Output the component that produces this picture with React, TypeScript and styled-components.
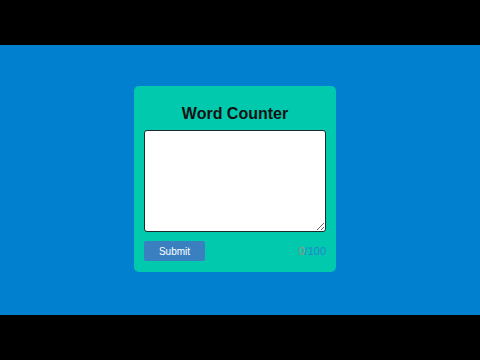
import React, { useState } from 'react';
import styled, { createGlobalStyle } from 'styled-components';

const GlobalStyle = createGlobalStyle`
  html, body {
    margin: 0;
    padding: 0;
    background: #000;
    font-family: "Liberation Sans", Arial, sans-serif;
  }
`;

const Frame = styled.div`
  height: 360px;
  display: flex;
  flex-direction: column;
  justify-content: center;
`;

const Stage = styled.main`
  height: 270px;
  box-sizing: border-box;
  background-color: #0080cf;
  display: flex;
  align-items: center;
  justify-content: center;
  padding: 0 10px 2px 0;
`;

const Card = styled.div`
  width: 202px;
  box-sizing: border-box;
  padding: 17px 10px 11px;
  background-color: #00c9ad;
  border-radius: 5px;
  display: flex;
  flex-direction: column;
`;

const Title = styled.h1`
  margin: 0 0 5px;
  font-size: 16px;
  line-height: 22px;
  font-weight: bold;
  color: #111;
  text-align: center;
`;

const TextBox = styled.textarea`
  width: 182px;
  height: 102px;
  box-sizing: border-box;
  border: 1px solid #1b2b2b;
  border-radius: 3px;
  background: #fff;
  padding: 4px;
  font-family: inherit;
  font-size: 12px;
  outline: none;
`;

const Footer = styled.div`
  margin-top: 9px;
  display: flex;
  align-items: center;
  justify-content: space-between;
`;

const SubmitButton = styled.button`
  width: 61px;
  height: 20px;
  border: none;
  border-radius: 2px;
  background-color: #3a7fc0;
  color: #fff;
  font-family: inherit;
  font-size: 10px;
  cursor: pointer;
`;

const Count = styled.span`
  font-size: 11px;
  color: #2e80d0;
`;

const Current = styled.span<{ $over: boolean }>`
  color: ${(p) => (p.$over ? '#d03030' : '#a5907c')};
`;

function App() {
  const [text, setText] = useState('');
  const max = 100;
  const words = text.trim() ? text.trim().split(/\s+/).length : 0;

  return (
    <>
      <GlobalStyle />
      <Frame>
        <Stage>
          <Card>
            <Title>Word Counter</Title>
            <TextBox value={text} onChange={(e) => setText(e.target.value)} />
            <Footer>
              <SubmitButton>Submit</SubmitButton>
              <Count>
                <Current $over={words > max}>{words}</Current>/{max}
              </Count>
            </Footer>
          </Card>
        </Stage>
      </Frame>
    </>
  );
}

export default App;
